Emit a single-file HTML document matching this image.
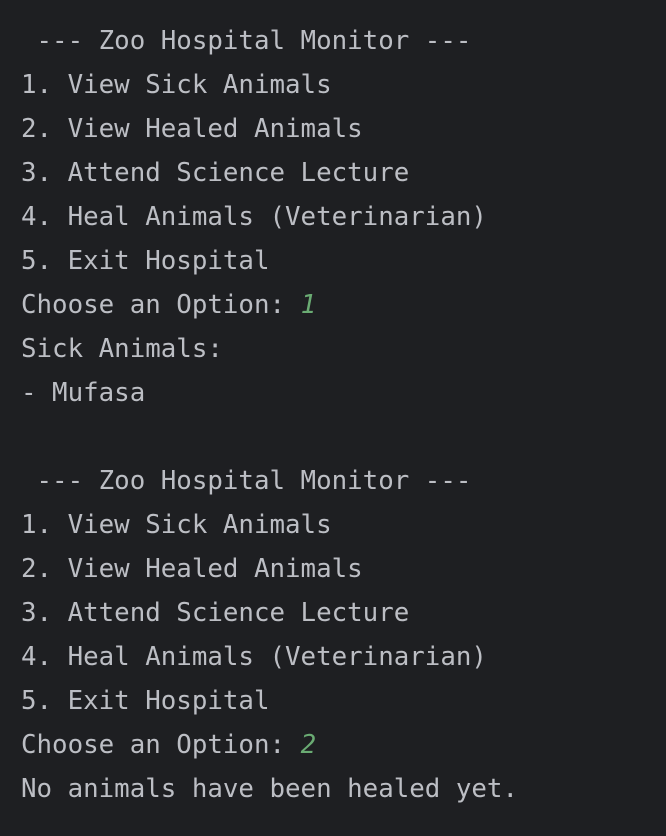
<!DOCTYPE html>
<html><head><meta charset="utf-8"><style>
html,body{margin:0;padding:0;background:#1e1f22;width:666px;height:836px;overflow:hidden}
pre{margin:0;padding:19px 0 0 21px;font-family:"DejaVu Sans Mono","Liberation Mono",monospace;font-size:25.8px;line-height:44px;color:#bcbec4}
i{color:#6aab73}
</style></head><body><pre> --- Zoo Hospital Monitor ---
1. View Sick Animals
2. View Healed Animals
3. Attend Science Lecture
4. Heal Animals (Veterinarian)
5. Exit Hospital
Choose an Option: <i>1</i>
Sick Animals:
- Mufasa

 --- Zoo Hospital Monitor ---
1. View Sick Animals
2. View Healed Animals
3. Attend Science Lecture
4. Heal Animals (Veterinarian)
5. Exit Hospital
Choose an Option: <i>2</i>
No animals have been healed yet.</pre></body></html>
